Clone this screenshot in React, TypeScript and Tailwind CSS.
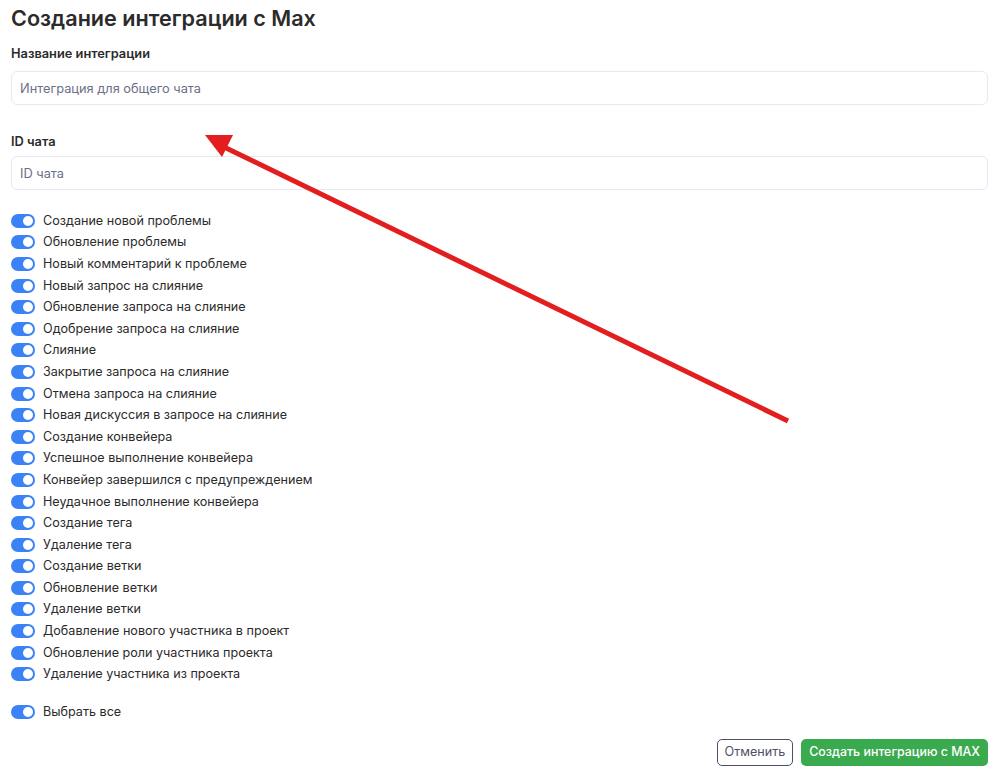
import { useState } from "react";

const events = [
  "Создание новой проблемы",
  "Обновление проблемы",
  "Новый комментарий к проблеме",
  "Новый запрос на слияние",
  "Обновление запроса на слияние",
  "Одобрение запроса на слияние",
  "Слияние",
  "Закрытие запроса на слияние",
  "Отмена запроса на слияние",
  "Новая дискуссия в запросе на слияние",
  "Создание конвейера",
  "Успешное выполнение конвейера",
  "Конвейер завершился с предупреждением",
  "Неудачное выполнение конвейера",
  "Создание тега",
  "Удаление тега",
  "Создание ветки",
  "Обновление ветки",
  "Удаление ветки",
  "Добавление нового участника в проект",
  "Обновление роли участника проекта",
  "Удаление участника из проекта",
];

function Toggle({ checked, onChange }: { checked: boolean; onChange: () => void }) {
  return (
    <button
      type="button"
      onClick={onChange}
      className={`flex h-[14px] w-[24px] shrink-0 items-center rounded-full px-[2px] ${
        checked ? "justify-end bg-[#3b82f6]" : "justify-start bg-gray-300"
      }`}
    >
      <span className="size-[10px] rounded-full bg-white" />
    </button>
  );
}

export default function App() {
  const [checked, setChecked] = useState<boolean[]>(events.map(() => true));
  const allChecked = checked.every(Boolean);

  const toggle = (i: number) =>
    setChecked((prev) => prev.map((v, idx) => (idx === i ? !v : v)));

  return (
    <div className="relative h-[775px] overflow-hidden bg-white pl-[11px] pr-[5px] font-['Inter',sans-serif] text-[#2b2b2b]">
      <h1 className="pt-[4px] text-[21.6px] font-semibold leading-[28px]">
        Создание интеграции с Max
      </h1>

      <label className="mt-[13px] block text-[12.8px] font-semibold leading-[18px]">
        Название интеграции
      </label>
      <input
        placeholder="Интеграция для общего чата"
        className="mt-[8px] block h-[34px] w-full rounded-[6px] border border-[#e6e8f5] px-[8px] text-[12.8px] outline-none placeholder:text-[#6b7088]"
      />

      <label className="mt-[28px] block text-[12.8px] font-semibold leading-[18px]">
        ID чата
      </label>
      <input
        placeholder="ID чата"
        className="mt-[5px] block h-[34px] w-full rounded-[6px] border border-[#e6e8f5] px-[8px] text-[12.8px] outline-none placeholder:text-[#6b7088]"
      />

      <div className="mt-[20px] flex flex-col">
        {events.map((e, i) => (
          <div key={e} className="flex h-[21.6px] items-center gap-[8px]">
            <Toggle checked={checked[i]} onChange={() => toggle(i)} />
            <span className="text-[12.6px] leading-[16px]">{e}</span>
          </div>
        ))}
      </div>

      <div className="mt-[16px] flex h-[21px] items-center gap-[8px]">
        <Toggle
          checked={allChecked}
          onChange={() => setChecked(events.map(() => !allChecked))}
        />
        <span className="text-[12.6px] leading-[16px]">Выбрать все</span>
      </div>

      <div className="mt-[17px] flex justify-end gap-[8px]">
        <button className="h-[27px] rounded-[5px] border border-[#4b5068] px-[7px] text-[12.6px] text-[#4b5068]">
          Отменить
        </button>
        <button className="h-[27px] rounded-[5px] bg-[#3aaa4f] px-[8px] text-[12.4px] font-medium text-white">
          Создать интеграцию с MAX
        </button>
      </div>

      <svg
        className="pointer-events-none absolute left-0 top-0"
        width="993"
        height="775"
        viewBox="0 0 993 775"
      >
        <line x1="788" y1="421" x2="222" y2="146" stroke="#e31e1e" strokeWidth="5" />
        <polygon points="205,135 233,135 222,157" fill="#e31e1e" />
      </svg>
    </div>
  );
}
